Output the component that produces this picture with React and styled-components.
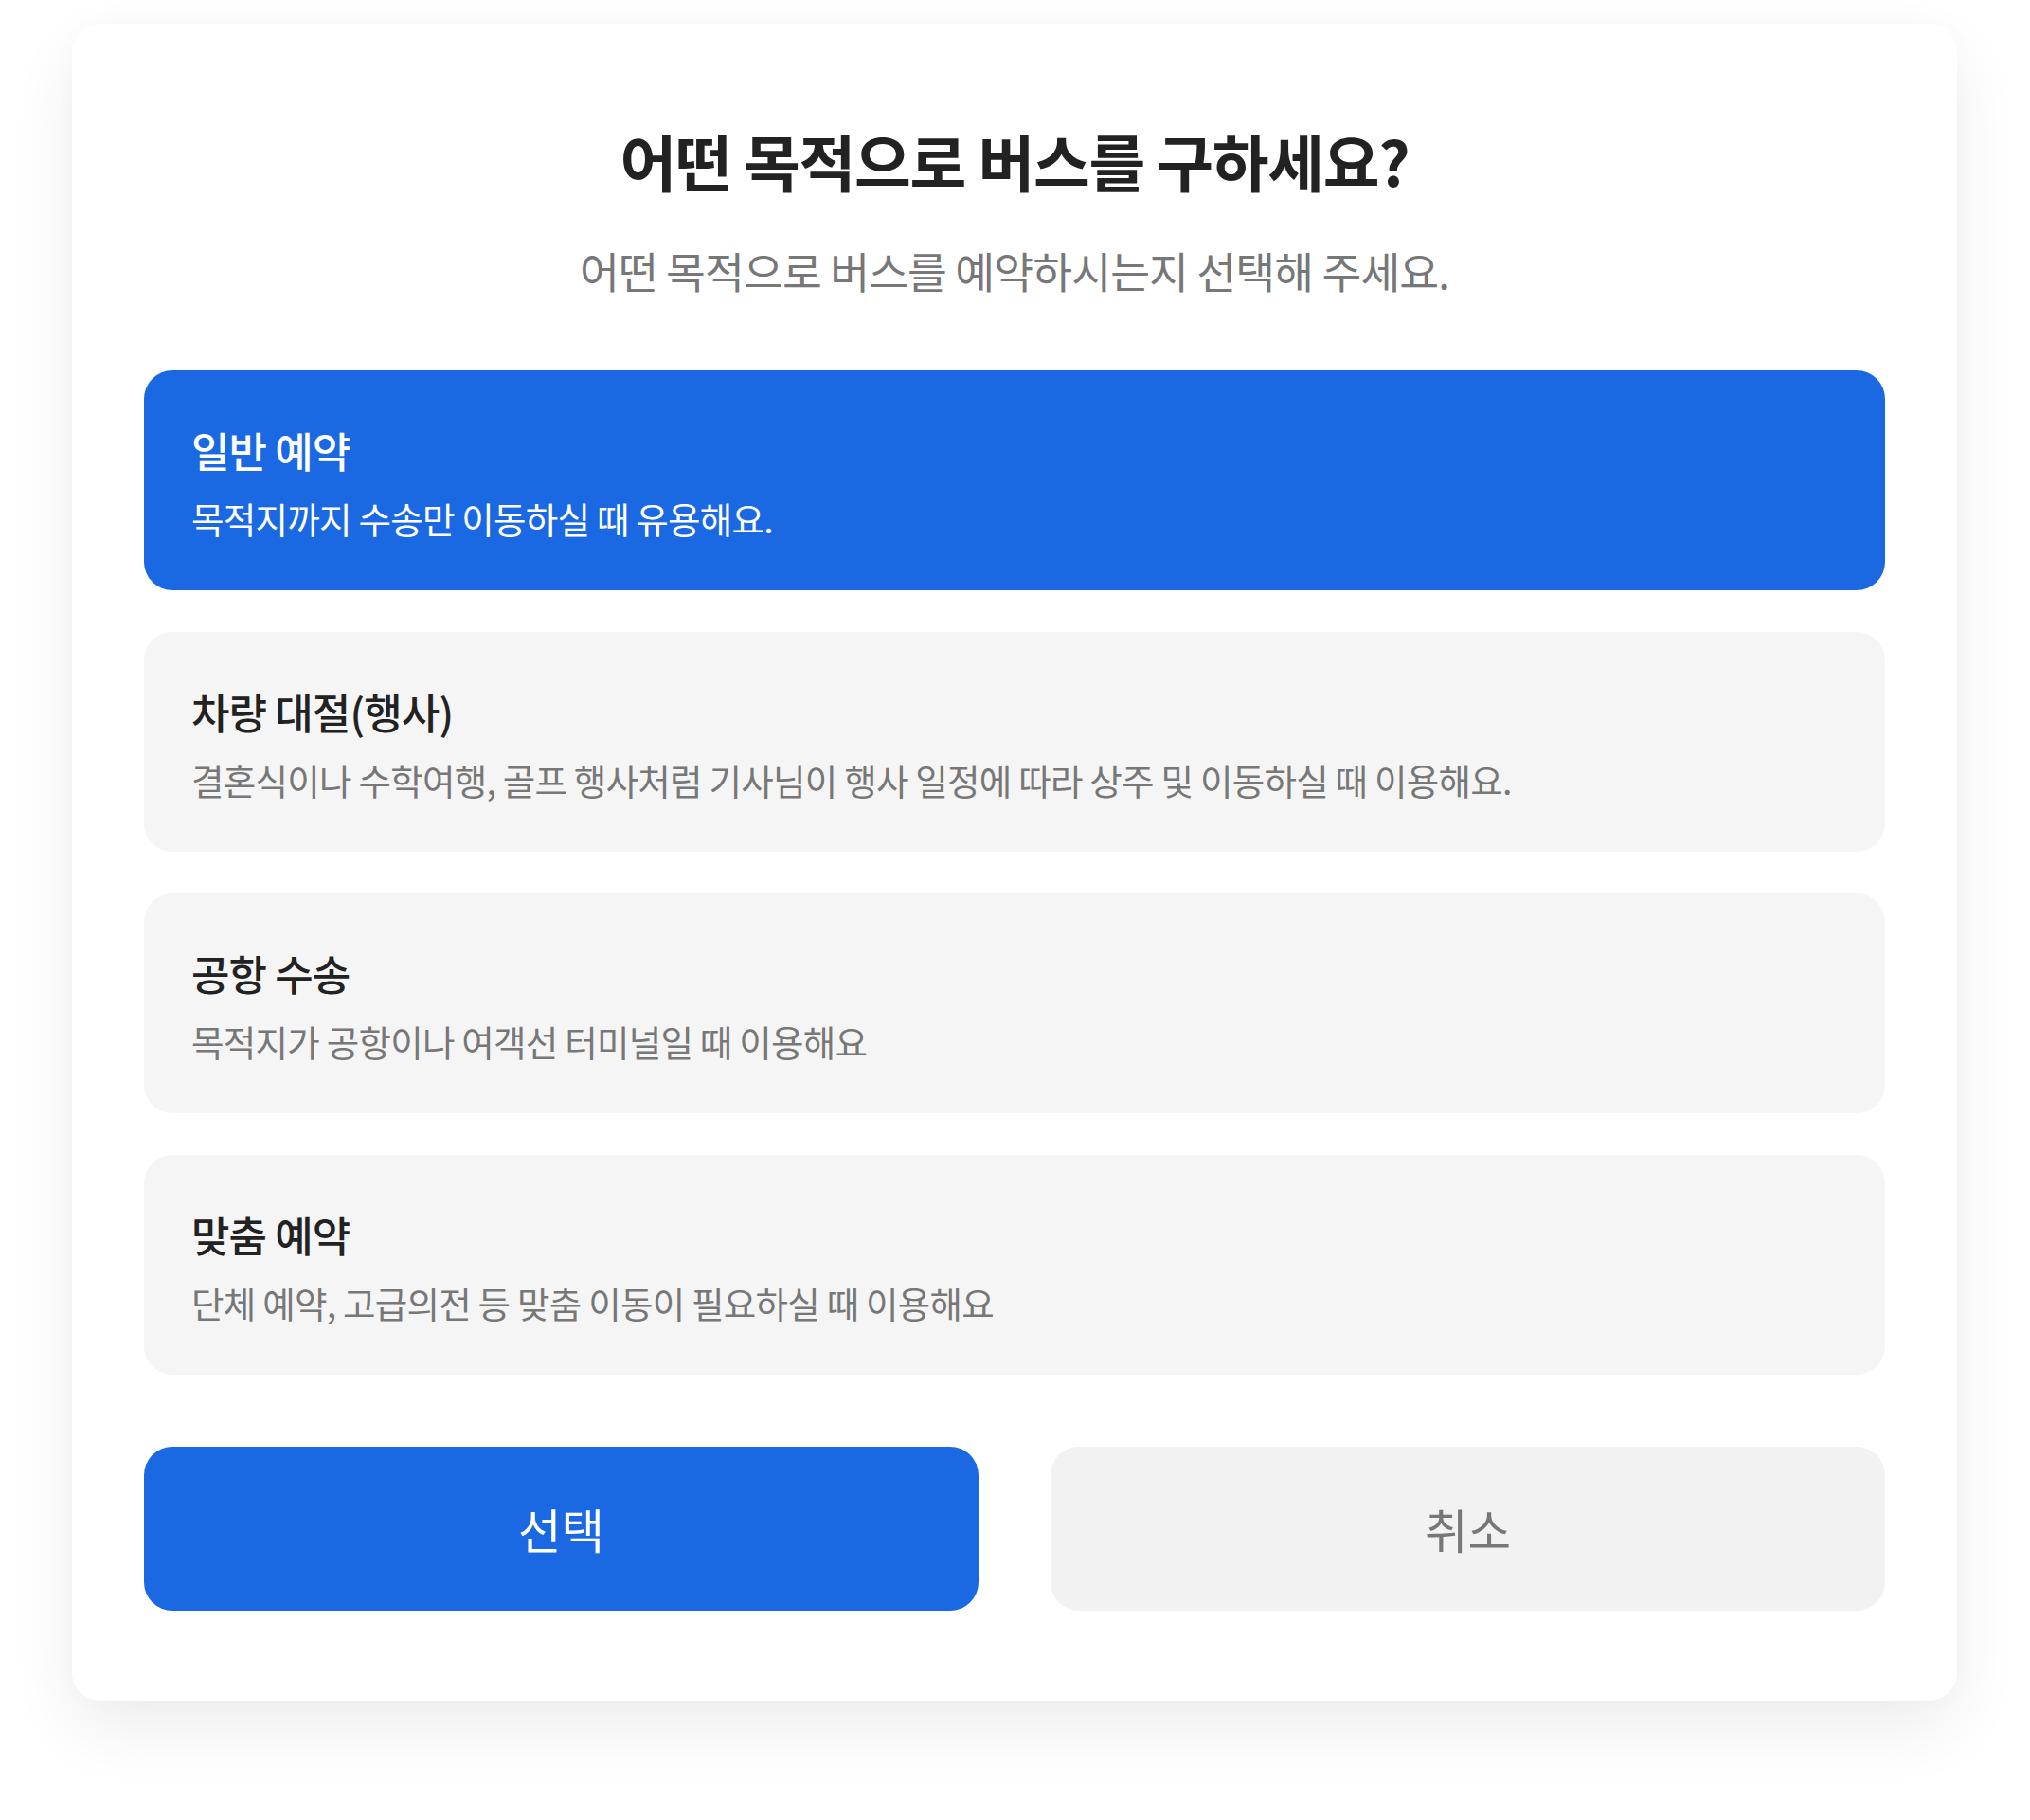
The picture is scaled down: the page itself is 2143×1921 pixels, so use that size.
import React, { useState } from "react";
import styled, { createGlobalStyle } from "styled-components";

const GlobalStyle = createGlobalStyle`
  html, body {
    margin: 0;
    padding: 0;
    background: #fff;
  }
  body {
    font-family: "Noto Sans CJK KR", "Noto Sans", sans-serif;
  }
  * {
    box-sizing: border-box;
  }
`;

const Page = styled.div`
  padding: 25px 77px 110px 76px;
`;

const Card = styled.div`
  background: #fff;
  border-radius: 30px;
  box-shadow: 0 30px 70px rgba(0, 0, 0, 0.07), 0 0 30px rgba(0, 0, 0, 0.02);
  padding: 99px 76px 95px;
  display: flex;
  flex-direction: column;
`;

const Title = styled.h1`
  margin: 0;
  text-align: center;
  font-size: 65px;
  line-height: 90px;
  font-weight: 700;
  color: #222;
  letter-spacing: -0.02em;
`;

const Subtitle = styled.p`
  margin: 40px 0 0;
  text-align: center;
  font-size: 45.5px;
  line-height: 62px;
  font-weight: 400;
  color: #777;
  letter-spacing: -0.02em;
`;

const OptionList = styled.div`
  margin-top: 75px;
  display: flex;
  flex-direction: column;
  gap: 44px;
`;

const Option = styled.button`
  all: unset;
  box-sizing: border-box;
  cursor: pointer;
  height: 232px;
  border-radius: 30px;
  padding: 2px 50px 0;
  display: flex;
  flex-direction: column;
  justify-content: center;
  gap: 15px;
  background: ${(p) => (p.$active ? "#1b69e2" : "#f5f5f5")};
`;

const OptionTitle = styled.div`
  font-size: 44px;
  line-height: 62px;
  font-weight: 500;
  letter-spacing: -0.02em;
  color: ${(p) => (p.$active ? "#fff" : "#222")};
`;

const OptionDesc = styled.div`
  font-size: 37.5px;
  line-height: 52px;
  font-weight: 400;
  letter-spacing: -0.02em;
  color: ${(p) => (p.$active ? "#fff" : "#777")};
`;

const ButtonRow = styled.div`
  margin-top: 76px;
  display: grid;
  grid-template-columns: 1fr 1fr;
  gap: 76px;
`;

const ActionButton = styled.button`
  all: unset;
  box-sizing: border-box;
  cursor: pointer;
  height: 173px;
  border-radius: 30px;
  display: flex;
  align-items: center;
  justify-content: center;
  font-family: "Noto Sans CJK KR", "Noto Sans", sans-serif;
  font-size: 49.5px;
  font-weight: 400;
  background: ${(p) => (p.$primary ? "#1b69e2" : "#f2f2f2")};
  color: ${(p) => (p.$primary ? "#fff" : "#777")};
`;

const options = [
  { title: "일반 예약", desc: "목적지까지 수송만 이동하실 때 유용해요." },
  {
    title: "차량 대절(행사)",
    desc: "결혼식이나 수학여행, 골프 행사처럼 기사님이 행사 일정에 따라 상주 및 이동하실 때 이용해요.",
  },
  { title: "공항 수송", desc: "목적지가 공항이나 여객선 터미널일 때 이용해요" },
  { title: "맞춤 예약", desc: "단체 예약, 고급의전 등 맞춤 이동이 필요하실 때 이용해요" },
];

export default function App() {
  const [selected, setSelected] = useState(0);

  return (
    <>
      <GlobalStyle />
      <Page>
        <Card>
          <Title>어떤 목적으로 버스를 구하세요?</Title>
          <Subtitle>어떤 목적으로 버스를 예약하시는지 선택해 주세요.</Subtitle>
          <OptionList>
            {options.map((o, i) => (
              <Option key={o.title} $active={selected === i} onClick={() => setSelected(i)}>
                <OptionTitle $active={selected === i}>{o.title}</OptionTitle>
                <OptionDesc $active={selected === i}>{o.desc}</OptionDesc>
              </Option>
            ))}
          </OptionList>
          <ButtonRow>
            <ActionButton $primary>선택</ActionButton>
            <ActionButton>취소</ActionButton>
          </ButtonRow>
        </Card>
      </Page>
    </>
  );
}
